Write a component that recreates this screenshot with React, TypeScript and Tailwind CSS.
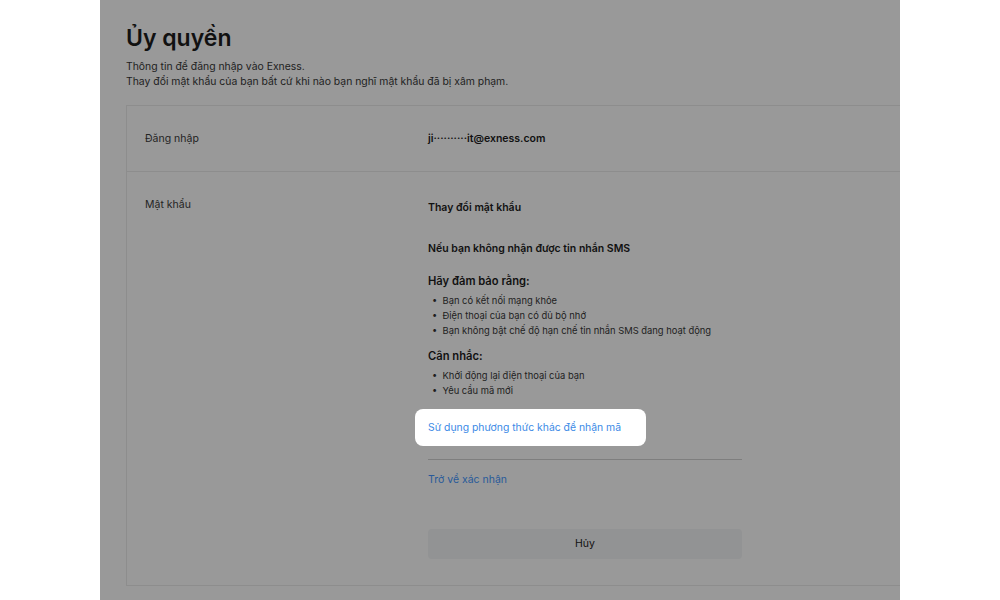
export default function App() {
  return (
    <div className="flex h-[600px] w-full bg-white font-['Inter','Liberation_Sans',sans-serif]">
      <div className="ml-[100px] h-full w-[800px] overflow-hidden bg-[#999999] pl-[26px] pt-[24px]">
        <h1 className="text-[23px] font-semibold leading-[28px] text-[#111]">Ủy quyền</h1>
        <div className="mt-[7px] text-[10.4px] leading-[15px] text-[#1e1e1e]">
          <p>Thông tin để đăng nhập vào Exness.</p>
          <p>Thay đổi mật khẩu của bạn bất cứ khi nào bạn nghĩ mật khẩu đã bị xâm phạm.</p>
        </div>

        <div className="mt-[16px] w-[820px] border border-[#8d8d8d]">
          <div className="flex h-[66px] items-center border-b border-[#8d8d8d]">
            <div className="w-[301px] pl-[18px] text-[10.5px] text-[#242424]">Đăng nhập</div>
            <div className="text-[10.5px] font-semibold text-[#111]">ji··········it@exness.com</div>
          </div>

          <div className="flex pb-[26px] pt-[26px]">
            <div className="w-[301px] pl-[18px] text-[10.5px] leading-[14px] text-[#242424]">Mật khẩu</div>
            <div className="w-[314px] pt-[3px] text-[#111]">
              <p className="text-[10.5px] font-semibold leading-[14px]">Thay đổi mật khẩu</p>
              <p className="mt-[27px] text-[10.5px] font-semibold leading-[14px]">
                Nếu bạn không nhận được tin nhắn SMS
              </p>
              <p className="mt-[17px] text-[11.2px] font-semibold leading-[16px]">Hãy đảm bảo rằng:</p>
              <ul className="mt-[4px] pl-[4px] text-[9.4px] leading-[15px] text-[#1e1e1e]">
                <li>• &nbsp;Bạn có kết nối mạng khỏe</li>
                <li>• &nbsp;Điện thoại của bạn có đủ bộ nhớ</li>
                <li>• &nbsp;Bạn không bật chế độ hạn chế tin nhắn SMS đang hoạt động</li>
              </ul>
              <p className="mt-[10px] text-[11.2px] font-semibold leading-[16px]">Cân nhắc:</p>
              <ul className="mt-[4px] pl-[4px] text-[9.4px] leading-[15px] text-[#1e1e1e]">
                <li>• &nbsp;Khởi động lại điện thoại của bạn</li>
                <li>• &nbsp;Yêu cầu mã mới</li>
              </ul>

              <div className="-ml-[13px] mt-[11px] flex h-[37px] w-[231px] items-center rounded-lg bg-white px-[13px]">
                <a className="text-[10.4px] text-[#3b8ae6]">Sử dụng phương thức khác để nhận mã</a>
              </div>

              <div className="mt-[13px] h-px w-full bg-[#7e7e7e]" />

              <a className="mt-[13px] block text-[10.5px] leading-[14px] text-[#28599a]">Trở về xác nhận</a>

              <button className="mt-[42px] flex h-[30px] w-full items-center justify-center rounded bg-[#929394] text-[10.5px] text-[#111]">
                Hủy
              </button>
            </div>
          </div>
        </div>
      </div>
    </div>
  );
}
